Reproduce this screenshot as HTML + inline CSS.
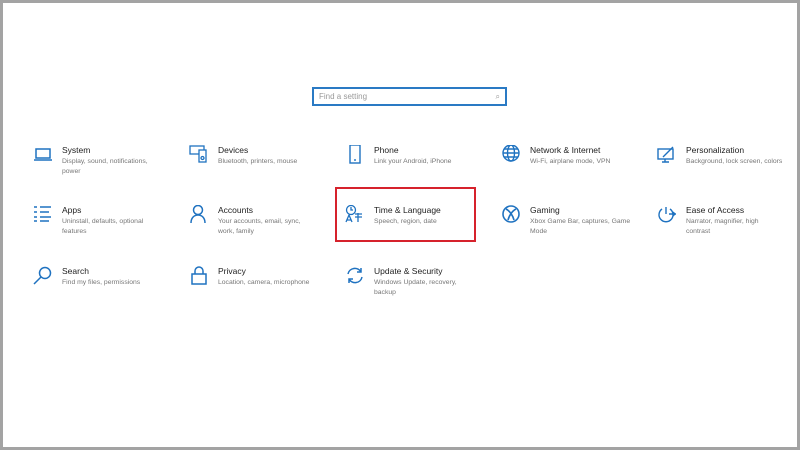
<!DOCTYPE html>
<html><head><style>
body{margin:0;width:800px;height:450px;background:#fff;font-family:"Liberation Sans",sans-serif;position:relative;overflow:hidden}
.frame{position:absolute;left:0;top:0;width:794px;height:444px;border:3px solid #a3a3a3}
.search{position:absolute;left:312px;top:87px;width:186px;height:15px;border:2px solid #2a7ac4;font-size:8px;color:#999;line-height:15px;padding-left:5px;box-sizing:content-box}
.item{position:absolute;width:130px}
.item svg{position:absolute;left:0;top:0}
.t{position:absolute;left:29px;top:0;font-size:8.5px;color:#222;white-space:nowrap}
.d{position:absolute;left:29px;top:12px;font-size:6.8px;color:#777;line-height:10px;width:100px}
.hl{position:absolute;left:335px;top:187px;width:137px;height:51px;border:2px solid #d6222c}
</style></head><body>
<div class="frame"></div>
<div class="search">Find a setting<span style="position:absolute;right:5px;top:0;color:#999">&#x2315;</span></div>
<div class="hl"></div>

<div class="item" style="left:33px;top:145px"><svg width="20" height="20" viewBox="0 0 20 20" fill="none" stroke="#1f72c0" stroke-width="1.5"><rect x="3" y="4" width="14" height="9"/><path d="M1 15h18"/></svg><div class="t">System</div><div class="d">Display, sound, notifications, power</div></div>
<div class="item" style="left:189px;top:145px"><svg width="20" height="20" viewBox="0 0 20 20" fill="none" stroke="#1f72c0" stroke-width="1.3"><rect x="1" y="1" width="14" height="8"/><rect x="10" y="5" width="7" height="12" fill="#fff"/><circle cx="13.5" cy="13" r="1.5"/></svg><div class="t">Devices</div><div class="d">Bluetooth, printers, mouse</div></div>
<div class="item" style="left:345px;top:145px"><svg width="20" height="20" viewBox="0 0 20 20" fill="none" stroke="#1f72c0" stroke-width="1.4"><rect x="5" y="0" width="10" height="18"/><path d="M9 15h2"/></svg><div class="t">Phone</div><div class="d" style="width:120px">Link your Android, iPhone</div></div>
<div class="item" style="left:501px;top:145px"><svg width="20" height="20" viewBox="0 0 20 20" fill="none" stroke="#1f72c0" stroke-width="1.4"><circle cx="10" cy="8" r="8"/><ellipse cx="10" cy="8" rx="3.5" ry="8"/><path d="M2 8h16M3 4h14M3 12h14"/></svg><div class="t">Network &amp; Internet</div><div class="d" style="width:120px">Wi-Fi, airplane mode, VPN</div></div>
<div class="item" style="left:657px;top:145px"><svg width="20" height="20" viewBox="0 0 20 20" fill="none" stroke="#1f72c0" stroke-width="1.4"><rect x="1" y="4" width="15" height="10"/><path d="M8 14v3M5 17h7M6 12l10-10"/></svg><div class="t">Personalization</div><div class="d" style="width:130px">Background, lock screen, colors</div></div>

<div class="item" style="left:33px;top:205px"><svg width="20" height="20" viewBox="0 0 20 20" fill="none" stroke="#1f72c0" stroke-width="1.6"><path d="M1 2h3M1 7h3M1 12h3M1 16h3M7 2h11M7 7h9M7 12h11M7 16h9"/></svg><div class="t">Apps</div><div class="d">Uninstall, defaults, optional features</div></div>
<div class="item" style="left:189px;top:205px"><svg width="20" height="20" viewBox="0 0 20 20" fill="none" stroke="#1f72c0" stroke-width="1.5"><circle cx="9" cy="5" r="4.5"/><path d="M2 18c0-5 3-8 7-8s7 3 7 8"/></svg><div class="t">Accounts</div><div class="d">Your accounts, email, sync, work, family</div></div>
<div class="item" style="left:345px;top:205px"><svg width="20" height="20" viewBox="0 0 20 20" fill="none" stroke="#1f72c0" stroke-width="1.3"><circle cx="6" cy="5" r="4.5"/><path d="M6 2v3h2M1 17l3-7 3 7M2 15h4M10 9h7M13 8v9M10 12h7"/></svg><div class="t">Time &amp; Language</div><div class="d">Speech, region, date</div></div>
<div class="item" style="left:501px;top:205px"><svg width="20" height="20" viewBox="0 0 20 20" fill="none" stroke="#1f72c0" stroke-width="1.6"><circle cx="10" cy="9" r="8"/><path d="M5 4c4 2 7 7 8 11M15 4c-4 2-7 7-8 11"/></svg><div class="t">Gaming</div><div class="d" style="width:110px">Xbox Game Bar, captures, Game Mode</div></div>
<div class="item" style="left:657px;top:205px"><svg width="20" height="20" viewBox="0 0 20 20" fill="none" stroke="#1f72c0" stroke-width="1.4"><path d="M5 4a7 7 0 1 0 8 0M9 2v7M12 9h7M16 7l2 2-2 2"/></svg><div class="t">Ease of Access</div><div class="d" style="width:95px">Narrator, magnifier, high contrast</div></div>

<div class="item" style="left:33px;top:266px"><svg width="20" height="20" viewBox="0 0 20 20" fill="none" stroke="#1f72c0" stroke-width="1.5"><circle cx="12" cy="7" r="5.5"/><path d="M8 11l-7 7"/></svg><div class="t">Search</div><div class="d" style="width:120px">Find my files, permissions</div></div>
<div class="item" style="left:189px;top:266px"><svg width="20" height="20" viewBox="0 0 20 20" fill="none" stroke="#1f72c0" stroke-width="1.5"><path d="M6 8V5a4 4 0 0 1 8 0v3"/><rect x="3" y="8" width="14" height="10"/></svg><div class="t">Privacy</div><div class="d" style="width:130px">Location, camera, microphone</div></div>
<div class="item" style="left:345px;top:266px"><svg width="20" height="20" viewBox="0 0 20 20" fill="none" stroke="#1f72c0" stroke-width="1.5"><path d="M3 8a7 7 0 0 1 13-2M17 11a7 7 0 0 1-13 2M16 2v4h-4M4 17v-4h4"/></svg><div class="t">Update &amp; Security</div><div class="d">Windows Update, recovery, backup</div></div>
</body></html>
